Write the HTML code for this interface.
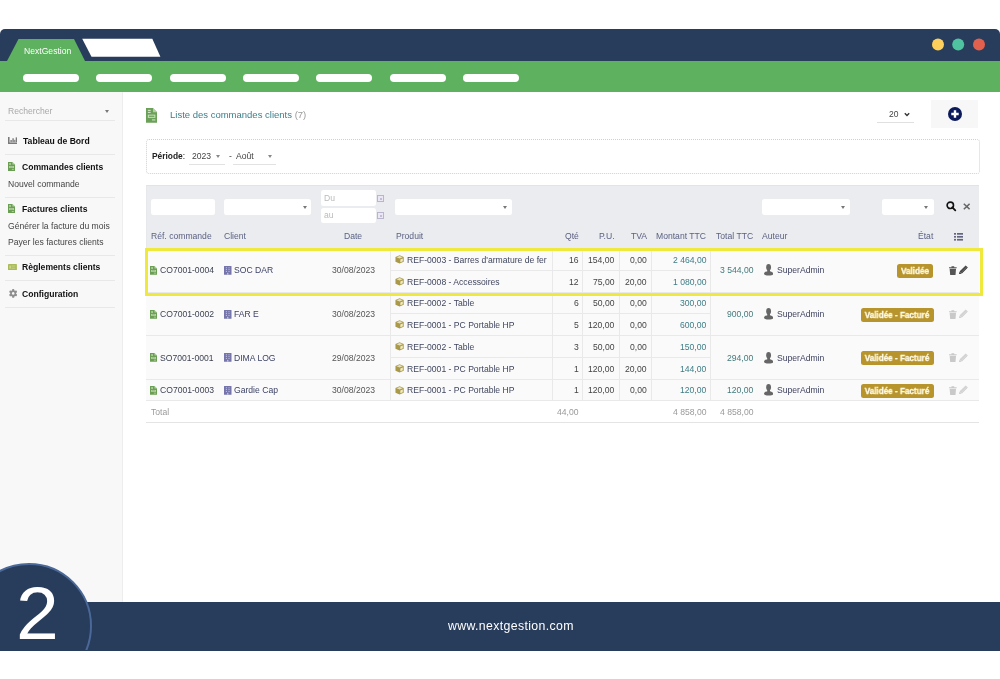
<!DOCTYPE html>
<html><head><meta charset="utf-8">
<style>
*{margin:0;padding:0;box-sizing:border-box}
html,body{width:1000px;height:679px;overflow:hidden;background:#fff;font-family:"Liberation Sans",sans-serif;position:relative}
.t{-webkit-font-smoothing:antialiased}
body>*{will-change:transform}
.a{position:absolute}
.t{position:absolute;white-space:nowrap;line-height:1}
</style></head>
<body>

<div class="a" style="left:0px;top:29px;width:1000.00px;height:32.00px;background:#283c5c;border-radius:5px 5px 0 0"></div>
<div class="a" style="left:0px;top:60.6px;width:1000.00px;height:31.40px;background:#5eb15f;"></div>
<svg class="a" style="left:0;top:0" width="1000" height="100">
  <polygon points="18.5,39 74,39 85,61 7,61" fill="#5eb15f"/>
  <polygon points="82.2,38.8 152.3,38.8 160.4,56.8 91.5,56.8" fill="#fff"/>
  <circle cx="938" cy="44.6" r="6" fill="#fdd05b"/>
  <circle cx="958.2" cy="44.6" r="6" fill="#4fc3a0"/>
  <circle cx="979" cy="44.6" r="6" fill="#e2604e"/>
</svg>
<div class="t" style="top:47.15px;font-size:8.6px;color:#fff;left:23.5px;">NextGestion</div>
<div class="a" style="left:23.0px;top:74px;width:56.00px;height:8.00px;background:#fff;border-radius:4px"></div>
<div class="a" style="left:96.3px;top:74px;width:56.00px;height:8.00px;background:#fff;border-radius:4px"></div>
<div class="a" style="left:169.6px;top:74px;width:56.00px;height:8.00px;background:#fff;border-radius:4px"></div>
<div class="a" style="left:242.9px;top:74px;width:56.00px;height:8.00px;background:#fff;border-radius:4px"></div>
<div class="a" style="left:316.2px;top:74px;width:56.00px;height:8.00px;background:#fff;border-radius:4px"></div>
<div class="a" style="left:389.5px;top:74px;width:56.00px;height:8.00px;background:#fff;border-radius:4px"></div>
<div class="a" style="left:462.8px;top:74px;width:56.00px;height:8.00px;background:#fff;border-radius:4px"></div>
<div class="a" style="left:0px;top:92px;width:122.50px;height:509.50px;background:#f8f8f8;border-right:1px solid #ededed"></div>
<div class="t" style="top:107.45px;font-size:8.6px;color:#a8a8a8;left:8.4px;">Rechercher</div>
<div class="a" style="left:105px;top:110px;width:0;height:0;border-left:2.5px solid transparent;border-right:2.5px solid transparent;border-top:3px solid #777"></div>
<div class="a" style="left:5px;top:119.5px;width:110.00px;height:1.00px;background:#e8e8e8;"></div>
<div class="a" style="left:5px;top:154.3px;width:110.00px;height:1.00px;background:#e8e8e8;"></div>
<div class="a" style="left:5px;top:196.6px;width:110.00px;height:1.00px;background:#e8e8e8;"></div>
<div class="a" style="left:5px;top:254.5px;width:110.00px;height:1.00px;background:#e8e8e8;"></div>
<div class="a" style="left:5px;top:280.3px;width:110.00px;height:1.00px;background:#e8e8e8;"></div>
<div class="a" style="left:5px;top:307.2px;width:110.00px;height:1.00px;background:#e8e8e8;"></div>
<svg class="a" style="left:8px;top:136.7px;" width="9.2" height="7.2" viewBox="0 0 13 10" preserveAspectRatio="none"><path d="M0,0 H2.2 V7.8 H13 V10 H0 Z" fill="#7a7a7a"/><rect x="3.4" y="4.2" width="2" height="3" fill="#7a7a7a"/><rect x="6.2" y="1.8" width="2" height="5.4" fill="#7a7a7a"/><rect x="8.8" y="4" width="1.6" height="3.2" fill="#7a7a7a"/><rect x="10.9" y="0.5" width="2" height="6.7" fill="#7a7a7a"/></svg>
<div class="t" style="top:136.65px;font-size:8.6px;color:#111;font-weight:bold;left:22.8px;">Tableau de Bord</div>
<svg class="a" style="left:8px;top:162px;" width="7" height="9" viewBox="0 0 12 16" preserveAspectRatio="none"><path d="M0,0 H7.5 L12,4.5 V16 H0 Z" fill="#6a9e52"/><path d="M7.5,0 V4.5 H12" fill="#cfe3c2" opacity="0.7"/><rect x="2" y="2" width="3" height="1.2" fill="#cfe3c2"/><rect x="2" y="4.2" width="3" height="1.2" fill="#cfe3c2"/><rect x="2" y="7.2" width="8" height="3.4" fill="#cfe3c2"/><rect x="3" y="8.2" width="6" height="1.4" fill="#6a9e52"/><rect x="6.5" y="12.3" width="3.5" height="1.2" fill="#cfe3c2"/></svg>
<svg class="a" style="left:8px;top:204px;" width="7" height="9.1" viewBox="0 0 12 16" preserveAspectRatio="none"><path d="M0,0 H7.5 L12,4.5 V16 H0 Z" fill="#6a9e52"/><path d="M7.5,0 V4.5 H12" fill="#cfe3c2" opacity="0.7"/><rect x="2" y="2" width="3" height="1.2" fill="#cfe3c2"/><rect x="2" y="4.2" width="3" height="1.2" fill="#cfe3c2"/><rect x="2" y="7.2" width="8" height="3.4" fill="#cfe3c2"/><rect x="3" y="8.2" width="6" height="1.4" fill="#6a9e52"/><rect x="6.5" y="12.3" width="3.5" height="1.2" fill="#cfe3c2"/></svg>
<svg class="a" style="left:8.1px;top:263.9px;" width="8.9" height="6.2" viewBox="0 0 14 10" preserveAspectRatio="none"><rect x="0" y="0" width="14" height="10" rx="1" fill="#a9bb58"/><rect x="2.5" y="2.5" width="1.6" height="5" fill="#dfe8b0"/><rect x="5.5" y="2.5" width="6" height="1.5" fill="#c9d68a"/><rect x="5.5" y="6" width="6" height="1.5" fill="#c9d68a"/></svg>
<svg class="a" style="left:8.5px;top:288.8px;" width="8.4" height="8.8" viewBox="0 0 16 16" preserveAspectRatio="none"><g fill="#8e8e8e"><circle cx="8" cy="8" r="5.6"/><rect x="6" y="0" width="4" height="16" rx="1.2" transform="rotate(0 8 8)"/><rect x="6" y="0" width="4" height="16" rx="1.2" transform="rotate(60 8 8)"/><rect x="6" y="0" width="4" height="16" rx="1.2" transform="rotate(120 8 8)"/></g><circle cx="8" cy="8" r="2.4" fill="#f8f8f8"/></svg>
<svg class="a" style="left:146.2px;top:107.7px;" width="11.2" height="14.8" viewBox="0 0 12 16" preserveAspectRatio="none"><path d="M0,0 H7.5 L12,4.5 V16 H0 Z" fill="#6ba058"/><path d="M7.5,0 V4.5 H12" fill="#cfe3c2" opacity="0.7"/><rect x="2" y="2" width="3" height="1.2" fill="#cfe3c2"/><rect x="2" y="4.2" width="3" height="1.2" fill="#cfe3c2"/><rect x="2" y="7.2" width="8" height="3.4" fill="#cfe3c2"/><rect x="3" y="8.2" width="6" height="1.4" fill="#6ba058"/><rect x="6.5" y="12.3" width="3.5" height="1.2" fill="#cfe3c2"/></svg>
<div class="t" style="top:163.35px;font-size:8.6px;color:#111;font-weight:bold;left:21.9px;">Commandes clients</div>
<div class="t" style="top:179.95px;font-size:8.6px;color:#444;left:7.9px;">Nouvel commande</div>
<div class="t" style="top:205.25px;font-size:8.6px;color:#111;font-weight:bold;left:21.8px;">Factures clients</div>
<div class="t" style="top:222.05px;font-size:8.6px;color:#444;left:7.8px;">Générer la facture du mois</div>
<div class="t" style="top:237.65px;font-size:8.6px;color:#444;left:7.8px;">Payer les factures clients</div>
<div class="t" style="top:263.15px;font-size:8.6px;color:#111;font-weight:bold;left:21.8px;">Règlements clients</div>
<div class="t" style="top:289.75px;font-size:8.6px;color:#111;font-weight:bold;left:21.8px;">Configuration</div>
<div class="t" style="top:110.33px;font-size:9.5px;color:#3b7f8c;left:170.4px;">Liste des commandes clients <span style="color:#999">(7)</span></div>
<div class="t" style="top:109.93px;font-size:8.5px;color:#444;left:888.5px;">20</div>
<svg class="a" style="left:903.5px;top:111.5px;" width="6" height="5" viewBox="0 0 6 5" preserveAspectRatio="none"><path d="M0.8,1.2 L3,3.4 L5.2,1.2" stroke="#333" stroke-width="1.4" fill="none"/></svg>
<div class="a" style="left:876.5px;top:122px;width:36.50px;height:1.00px;background:#e0e0e0;"></div>
<div class="a" style="left:930.7px;top:100px;width:46.90px;height:28.00px;background:#f7f7f8;"></div>
<svg class="a" style="left:947.5px;top:107.3px;" width="14" height="14" viewBox="0 0 14 14" preserveAspectRatio="none"><circle cx="7" cy="7" r="7" fill="#0d1a5a"/><path d="M7,3.3 V10.7 M3.3,7 H10.7" stroke="#fff" stroke-width="2.4"/></svg>
<div class="a" style="left:146px;top:139px;width:834px;height:35px;border:1px dotted #d0d0d0;border-radius:3px"></div>
<div class="t" style="top:152.31px;font-size:8.4px;color:#222;font-weight:bold;left:152.3px;">Période<span style="font-weight:normal">:</span></div>
<div class="t" style="top:152.15px;font-size:8.6px;color:#444;left:192px;">2023</div>
<div class="t" style="top:152.15px;font-size:8.6px;color:#444;left:229px;">-</div>
<div class="t" style="top:152.15px;font-size:8.6px;color:#444;left:236px;">Août</div>
<div class="a" style="left:215.5px;top:155px;width:0;height:0;border-left:2.5px solid transparent;border-right:2.5px solid transparent;border-top:3px solid #888"></div>
<div class="a" style="left:267.5px;top:155px;width:0;height:0;border-left:2.5px solid transparent;border-right:2.5px solid transparent;border-top:3px solid #888"></div>
<div class="a" style="left:189px;top:164px;width:35.60px;height:1.00px;background:#e2e2e2;"></div>
<div class="a" style="left:233px;top:164px;width:43.00px;height:1.00px;background:#e2e2e2;"></div>
<div class="a" style="left:146px;top:185.2px;width:832.80px;height:62.80px;background:#ebecef;border-top:1.6px solid #e2e3e6;border-left:1px solid #e7e8eb"></div>
<div class="a" style="left:150.6px;top:198.6px;width:64.10px;height:16.20px;background:#fff;border-radius:2.5px"></div>
<div class="a" style="left:224px;top:198.6px;width:87.40px;height:16.20px;background:#fff;border-radius:2.5px"></div>
<div class="a" style="left:302.5px;top:205.5px;width:0;height:0;border-left:2.5px solid transparent;border-right:2.5px solid transparent;border-top:3px solid #777"></div>
<div class="a" style="left:321.4px;top:190.2px;width:54.50px;height:15.60px;background:#fff;border-radius:2.5px"></div>
<div class="a" style="left:321.4px;top:207.6px;width:54.50px;height:15.30px;background:#fff;border-radius:2.5px"></div>
<div class="a" style="left:395.4px;top:198.6px;width:117.40px;height:16.20px;background:#fff;border-radius:2.5px"></div>
<div class="a" style="left:503.0px;top:205.5px;width:0;height:0;border-left:2.5px solid transparent;border-right:2.5px solid transparent;border-top:3px solid #777"></div>
<div class="a" style="left:762.3px;top:198.6px;width:87.80px;height:16.20px;background:#fff;border-radius:2.5px"></div>
<div class="a" style="left:840.5px;top:205.5px;width:0;height:0;border-left:2.5px solid transparent;border-right:2.5px solid transparent;border-top:3px solid #777"></div>
<div class="a" style="left:881.7px;top:198.6px;width:51.60px;height:16.20px;background:#fff;border-radius:2.5px"></div>
<div class="a" style="left:923.5px;top:205.5px;width:0;height:0;border-left:2.5px solid transparent;border-right:2.5px solid transparent;border-top:3px solid #777"></div>
<div class="t" style="top:193.75px;font-size:8.6px;color:#bbb;left:324px;">Du</div>
<div class="t" style="top:211.15px;font-size:8.6px;color:#bbb;left:324px;">au</div>
<div class="a" style="left:377.3px;top:195px;width:7.2px;height:6.6px;border:1px solid #b9b5cc;border-top-width:1.6px;background:#eae8f2"></div>
<div class="a" style="left:379.8px;top:197.6px;width:2.00px;height:2.00px;background:#c9b8d8;"></div>
<div class="a" style="left:377.3px;top:212.2px;width:7.2px;height:6.6px;border:1px solid #b9b5cc;border-top-width:1.6px;background:#eae8f2"></div>
<div class="a" style="left:379.8px;top:214.79999999999998px;width:2.00px;height:2.00px;background:#c9b8d8;"></div>
<svg class="a" style="left:945.5px;top:201px;" width="11" height="10.5" viewBox="0 0 11 10.5" preserveAspectRatio="none"><circle cx="4.3" cy="4.3" r="3.2" stroke="#111" stroke-width="1.6" fill="none"/><path d="M6.3,6.3 L9.3,9.3" stroke="#111" stroke-width="1.8" stroke-linecap="round"/></svg>
<svg class="a" style="left:963px;top:203px;" width="7.4" height="7" viewBox="0 0 7.4 7" preserveAspectRatio="none"><path d="M0.8,0.8 L6.6,6.2 M6.6,0.8 L0.8,6.2" stroke="#666" stroke-width="1.5"/></svg>
<div class="t" style="top:232.15px;font-size:8.6px;color:#5b6183;left:150.6px;">Réf. commande</div>
<div class="t" style="top:232.15px;font-size:8.6px;color:#5b6183;left:224px;">Client</div>
<div class="t" style="top:232.15px;font-size:8.6px;color:#5b6183;right:637.50px;">Date</div>
<div class="t" style="top:232.15px;font-size:8.6px;color:#5b6183;left:395.5px;">Produit</div>
<div class="t" style="top:232.15px;font-size:8.6px;color:#5b6183;right:421.00px;">Qté</div>
<div class="t" style="top:232.15px;font-size:8.6px;color:#5b6183;right:385.50px;">P.U.</div>
<div class="t" style="top:232.15px;font-size:8.6px;color:#5b6183;right:352.70px;">TVA</div>
<div class="t" style="top:232.15px;font-size:8.6px;color:#5b6183;right:293.80px;">Montant TTC</div>
<div class="t" style="top:232.15px;font-size:8.6px;color:#5b6183;right:246.50px;">Total TTC</div>
<div class="t" style="top:232.15px;font-size:8.6px;color:#5b6183;left:762.3px;">Auteur</div>
<div class="t" style="top:232.15px;font-size:8.6px;color:#5b6183;right:66.50px;">État</div>
<svg class="a" style="left:953.8px;top:233px;" width="9.4" height="7.8" viewBox="0 0 9.4 7.8" preserveAspectRatio="none"><g fill="#62657f"><rect x="0" y="0" width="2" height="1.7"/><rect x="0" y="2.95" width="2" height="1.7"/><rect x="0" y="5.9" width="2" height="1.7"/><rect x="3" y="0" width="6.4" height="1.7"/><rect x="3" y="2.95" width="6.4" height="1.7"/><rect x="3" y="5.9" width="6.4" height="1.7"/></g></svg>
<div class="a" style="left:146px;top:248px;width:833.00px;height:152.80px;background:#fafafa;"></div>
<div class="a" style="left:389.5px;top:248px;width:1.00px;height:152.80px;background:#e9e9e9;"></div>
<div class="a" style="left:552.1px;top:248px;width:1.00px;height:152.80px;background:#e9e9e9;"></div>
<div class="a" style="left:582.3px;top:248px;width:1.00px;height:152.80px;background:#e9e9e9;"></div>
<div class="a" style="left:618.6px;top:248px;width:1.00px;height:152.80px;background:#e9e9e9;"></div>
<div class="a" style="left:650.7px;top:248px;width:1.00px;height:152.80px;background:#e9e9e9;"></div>
<div class="a" style="left:709.8px;top:248px;width:1.00px;height:152.80px;background:#e9e9e9;"></div>
<div class="a" style="left:146px;top:291.5px;width:833.00px;height:1.00px;background:#e9e9e9;"></div>
<div class="a" style="left:390px;top:269.7px;width:320.30px;height:1.00px;background:#e9e9e9;"></div>
<svg class="a" style="left:150.2px;top:265.8px;" width="7.1" height="8.8" viewBox="0 0 12 16" preserveAspectRatio="none"><path d="M0,0 H7.5 L12,4.5 V16 H0 Z" fill="#6a9e52"/><path d="M7.5,0 V4.5 H12" fill="#cfe3c2" opacity="0.7"/><rect x="2" y="2" width="3" height="1.2" fill="#cfe3c2"/><rect x="2" y="4.2" width="3" height="1.2" fill="#cfe3c2"/><rect x="2" y="7.2" width="8" height="3.4" fill="#cfe3c2"/><rect x="3" y="8.2" width="6" height="1.4" fill="#6a9e52"/><rect x="6.5" y="12.3" width="3.5" height="1.2" fill="#cfe3c2"/></svg>
<div class="t" style="top:266.45px;font-size:8.6px;color:#3d4352;left:159.5px;">CO7001-0004</div>
<svg class="a" style="left:224px;top:265.8px;" width="7.5" height="8.7" viewBox="0 0 12 14" preserveAspectRatio="none"><rect x="0" y="0" width="12" height="14" rx="0.5" fill="#7574ab"/><g fill="#c9c8e6"><rect x="3" y="2" width="1.6" height="1.6"/><rect x="7.2" y="2" width="1.6" height="1.6"/><rect x="3" y="5" width="1.6" height="1.6"/><rect x="7.2" y="5" width="1.6" height="1.6"/><rect x="3" y="8" width="1.6" height="1.6"/><rect x="7.2" y="8" width="1.6" height="1.6"/><rect x="5" y="11" width="2" height="3"/></g></svg>
<div class="t" style="top:266.45px;font-size:8.6px;color:#3d4366;left:233.5px;">SOC DAR</div>
<div class="t" style="top:266.45px;font-size:8.6px;color:#555;right:625.00px;">30/08/2023</div>
<svg class="a" style="left:395.3px;top:254.70000000000002px;" width="9.2" height="8.8" viewBox="0 0 16 16" preserveAspectRatio="none"><path d="M8,0.5 L15.2,3.6 V12.2 L8,15.5 L0.8,12.2 V3.6 Z" fill="#a9994a"/><path d="M2.6,4 L8,1.8 L13.4,4 L8,6.3 Z" fill="#e9e2b8"/><path d="M9.3,8.2 L13.6,6.3 V11.2 L9.3,13.2 Z" fill="#f1ecc6"/></svg>
<div class="t" style="top:255.55px;font-size:8.6px;color:#40465f;left:406.5px;">REF-0003 - Barres d'armature de fer</div>
<div class="t" style="top:255.55px;font-size:8.6px;color:#444;right:421.50px;">16</div>
<div class="t" style="top:255.55px;font-size:8.6px;color:#444;right:385.50px;">154,00</div>
<div class="t" style="top:255.55px;font-size:8.6px;color:#444;right:353.50px;">0,00</div>
<div class="t" style="top:255.55px;font-size:8.6px;color:#3e7c86;right:294.00px;">2 464,00</div>
<svg class="a" style="left:395.3px;top:276.70000000000005px;" width="9.2" height="8.8" viewBox="0 0 16 16" preserveAspectRatio="none"><path d="M8,0.5 L15.2,3.6 V12.2 L8,15.5 L0.8,12.2 V3.6 Z" fill="#a9994a"/><path d="M2.6,4 L8,1.8 L13.4,4 L8,6.3 Z" fill="#e9e2b8"/><path d="M9.3,8.2 L13.6,6.3 V11.2 L9.3,13.2 Z" fill="#f1ecc6"/></svg>
<div class="t" style="top:277.55px;font-size:8.6px;color:#40465f;left:406.5px;">REF-0008 - Accessoires</div>
<div class="t" style="top:277.55px;font-size:8.6px;color:#444;right:421.50px;">12</div>
<div class="t" style="top:277.55px;font-size:8.6px;color:#444;right:385.50px;">75,00</div>
<div class="t" style="top:277.55px;font-size:8.6px;color:#444;right:353.50px;">20,00</div>
<div class="t" style="top:277.55px;font-size:8.6px;color:#3e7c86;right:294.00px;">1 080,00</div>
<div class="t" style="top:266.45px;font-size:8.6px;color:#447a7c;right:246.50px;">3 544,00</div>
<svg class="a" style="left:763.6px;top:264.4px;" width="9.2" height="11.5" viewBox="0 0 16 20" preserveAspectRatio="none"><ellipse cx="8" cy="5.8" rx="4.2" ry="5.6" fill="#666"/><rect x="5.6" y="9" width="4.8" height="5" fill="#666"/><path d="M0,17 C0,14 3.5,12.6 8,12.6 C12.5,12.6 16,14 16,17 C16,19.2 13,20 8,20 C3,20 0,19.2 0,17 Z" fill="#666"/></svg>
<div class="t" style="top:266.45px;font-size:8.6px;color:#3f4360;left:776.5px;">SuperAdmin</div>
<div class="a" style="left:897.3px;top:263.8px;width:36.00px;height:13.80px;background:#b8942c;border-radius:2.5px"></div>
<div class="t" style="top:266.87px;font-size:8.7px;color:#fffbe6;font-weight:bold;left:715.3px;width:400px;text-align:center;transform:scaleX(0.935);transform-origin:50% 50%;-webkit-text-stroke:0.3px #fffbe6;">Validée</div>
<svg class="a" style="left:949.2px;top:265.8px;" width="7.7" height="9.3" viewBox="0 0 14 17" preserveAspectRatio="none"><path d="M0,2.5 H14 V4.3 H0 Z M4.5,0.5 H9.5 V2.5 H4.5 Z" fill="#555"/><path d="M1.2,5 H12.8 L11.8,17 H2.2 Z" fill="#555"/></svg>
<svg class="a" style="left:958.8px;top:265.4px;" width="9.3" height="9.2" viewBox="0 0 16 16" preserveAspectRatio="none"><path d="M11.5,0.8 L15.2,4.5 L5,14.7 L1.3,11 Z" fill="#333"/><path d="M1,11.4 L4.6,15 L0,16 Z" fill="#333"/><path d="M3.2,11.6 L12.4,2.4 M4.4,12.8 L13.6,3.6" stroke="#fff" stroke-width="0.7" opacity="0.6"/></svg>
<div class="a" style="left:146px;top:334.9px;width:833.00px;height:1.00px;background:#e9e9e9;"></div>
<div class="a" style="left:390px;top:313.2px;width:320.30px;height:1.00px;background:#e9e9e9;"></div>
<svg class="a" style="left:150.2px;top:309.5px;" width="7.1" height="8.8" viewBox="0 0 12 16" preserveAspectRatio="none"><path d="M0,0 H7.5 L12,4.5 V16 H0 Z" fill="#6a9e52"/><path d="M7.5,0 V4.5 H12" fill="#cfe3c2" opacity="0.7"/><rect x="2" y="2" width="3" height="1.2" fill="#cfe3c2"/><rect x="2" y="4.2" width="3" height="1.2" fill="#cfe3c2"/><rect x="2" y="7.2" width="8" height="3.4" fill="#cfe3c2"/><rect x="3" y="8.2" width="6" height="1.4" fill="#6a9e52"/><rect x="6.5" y="12.3" width="3.5" height="1.2" fill="#cfe3c2"/></svg>
<div class="t" style="top:310.15px;font-size:8.6px;color:#3d4352;left:159.5px;">CO7001-0002</div>
<svg class="a" style="left:224px;top:309.5px;" width="7.5" height="8.7" viewBox="0 0 12 14" preserveAspectRatio="none"><rect x="0" y="0" width="12" height="14" rx="0.5" fill="#7574ab"/><g fill="#c9c8e6"><rect x="3" y="2" width="1.6" height="1.6"/><rect x="7.2" y="2" width="1.6" height="1.6"/><rect x="3" y="5" width="1.6" height="1.6"/><rect x="7.2" y="5" width="1.6" height="1.6"/><rect x="3" y="8" width="1.6" height="1.6"/><rect x="7.2" y="8" width="1.6" height="1.6"/><rect x="5" y="11" width="2" height="3"/></g></svg>
<div class="t" style="top:310.15px;font-size:8.6px;color:#3d4366;left:233.5px;">FAR E</div>
<div class="t" style="top:310.15px;font-size:8.6px;color:#555;right:625.00px;">30/08/2023</div>
<svg class="a" style="left:395.3px;top:298.45000000000005px;" width="9.2" height="8.8" viewBox="0 0 16 16" preserveAspectRatio="none"><path d="M8,0.5 L15.2,3.6 V12.2 L8,15.5 L0.8,12.2 V3.6 Z" fill="#a9994a"/><path d="M2.6,4 L8,1.8 L13.4,4 L8,6.3 Z" fill="#e9e2b8"/><path d="M9.3,8.2 L13.6,6.3 V11.2 L9.3,13.2 Z" fill="#f1ecc6"/></svg>
<div class="t" style="top:299.30px;font-size:8.6px;color:#40465f;left:406.5px;">REF-0002 - Table</div>
<div class="t" style="top:299.30px;font-size:8.6px;color:#444;right:421.50px;">6</div>
<div class="t" style="top:299.30px;font-size:8.6px;color:#444;right:385.50px;">50,00</div>
<div class="t" style="top:299.30px;font-size:8.6px;color:#444;right:353.50px;">0,00</div>
<div class="t" style="top:299.30px;font-size:8.6px;color:#3e7c86;right:294.00px;">300,00</div>
<svg class="a" style="left:395.3px;top:320.15px;" width="9.2" height="8.8" viewBox="0 0 16 16" preserveAspectRatio="none"><path d="M8,0.5 L15.2,3.6 V12.2 L8,15.5 L0.8,12.2 V3.6 Z" fill="#a9994a"/><path d="M2.6,4 L8,1.8 L13.4,4 L8,6.3 Z" fill="#e9e2b8"/><path d="M9.3,8.2 L13.6,6.3 V11.2 L9.3,13.2 Z" fill="#f1ecc6"/></svg>
<div class="t" style="top:321.00px;font-size:8.6px;color:#40465f;left:406.5px;">REF-0001 - PC Portable HP</div>
<div class="t" style="top:321.00px;font-size:8.6px;color:#444;right:421.50px;">5</div>
<div class="t" style="top:321.00px;font-size:8.6px;color:#444;right:385.50px;">120,00</div>
<div class="t" style="top:321.00px;font-size:8.6px;color:#444;right:353.50px;">0,00</div>
<div class="t" style="top:321.00px;font-size:8.6px;color:#3e7c86;right:294.00px;">600,00</div>
<div class="t" style="top:310.15px;font-size:8.6px;color:#447a7c;right:246.50px;">900,00</div>
<svg class="a" style="left:763.6px;top:308.09999999999997px;" width="9.2" height="11.5" viewBox="0 0 16 20" preserveAspectRatio="none"><ellipse cx="8" cy="5.8" rx="4.2" ry="5.6" fill="#666"/><rect x="5.6" y="9" width="4.8" height="5" fill="#666"/><path d="M0,17 C0,14 3.5,12.6 8,12.6 C12.5,12.6 16,14 16,17 C16,19.2 13,20 8,20 C3,20 0,19.2 0,17 Z" fill="#666"/></svg>
<div class="t" style="top:310.15px;font-size:8.6px;color:#3f4360;left:776.5px;">SuperAdmin</div>
<div class="a" style="left:860.8px;top:307.5px;width:72.50px;height:13.80px;background:#b8942c;border-radius:2.5px"></div>
<div class="t" style="top:310.57px;font-size:8.7px;color:#fffbe6;font-weight:bold;left:697.05px;width:400px;text-align:center;transform:scaleX(0.935);transform-origin:50% 50%;-webkit-text-stroke:0.3px #fffbe6;">Validée - Facturé</div>
<svg class="a" style="left:949.2px;top:309.5px;" width="7.7" height="9.3" viewBox="0 0 14 17" preserveAspectRatio="none"><path d="M0,2.5 H14 V4.3 H0 Z M4.5,0.5 H9.5 V2.5 H4.5 Z" fill="#c9c9c9"/><path d="M1.2,5 H12.8 L11.8,17 H2.2 Z" fill="#c9c9c9"/></svg>
<svg class="a" style="left:958.8px;top:309.09999999999997px;" width="9.3" height="9.2" viewBox="0 0 16 16" preserveAspectRatio="none"><path d="M11.5,0.8 L15.2,4.5 L5,14.7 L1.3,11 Z" fill="#cdcdcd"/><path d="M1,11.4 L4.6,15 L0,16 Z" fill="#cdcdcd"/><path d="M3.2,11.6 L12.4,2.4 M4.4,12.8 L13.6,3.6" stroke="#fff" stroke-width="0.7" opacity="0.6"/></svg>
<div class="a" style="left:146px;top:378.7px;width:833.00px;height:1.00px;background:#e9e9e9;"></div>
<div class="a" style="left:390px;top:356.8px;width:320.30px;height:1.00px;background:#e9e9e9;"></div>
<svg class="a" style="left:150.2px;top:353.09999999999997px;" width="7.1" height="8.8" viewBox="0 0 12 16" preserveAspectRatio="none"><path d="M0,0 H7.5 L12,4.5 V16 H0 Z" fill="#6a9e52"/><path d="M7.5,0 V4.5 H12" fill="#cfe3c2" opacity="0.7"/><rect x="2" y="2" width="3" height="1.2" fill="#cfe3c2"/><rect x="2" y="4.2" width="3" height="1.2" fill="#cfe3c2"/><rect x="2" y="7.2" width="8" height="3.4" fill="#cfe3c2"/><rect x="3" y="8.2" width="6" height="1.4" fill="#6a9e52"/><rect x="6.5" y="12.3" width="3.5" height="1.2" fill="#cfe3c2"/></svg>
<div class="t" style="top:353.75px;font-size:8.6px;color:#3d4352;left:159.5px;">SO7001-0001</div>
<svg class="a" style="left:224px;top:353.09999999999997px;" width="7.5" height="8.7" viewBox="0 0 12 14" preserveAspectRatio="none"><rect x="0" y="0" width="12" height="14" rx="0.5" fill="#7574ab"/><g fill="#c9c8e6"><rect x="3" y="2" width="1.6" height="1.6"/><rect x="7.2" y="2" width="1.6" height="1.6"/><rect x="3" y="5" width="1.6" height="1.6"/><rect x="7.2" y="5" width="1.6" height="1.6"/><rect x="3" y="8" width="1.6" height="1.6"/><rect x="7.2" y="8" width="1.6" height="1.6"/><rect x="5" y="11" width="2" height="3"/></g></svg>
<div class="t" style="top:353.75px;font-size:8.6px;color:#3d4366;left:233.5px;">DIMA LOG</div>
<div class="t" style="top:353.75px;font-size:8.6px;color:#555;right:625.00px;">29/08/2023</div>
<svg class="a" style="left:395.3px;top:341.95000000000005px;" width="9.2" height="8.8" viewBox="0 0 16 16" preserveAspectRatio="none"><path d="M8,0.5 L15.2,3.6 V12.2 L8,15.5 L0.8,12.2 V3.6 Z" fill="#a9994a"/><path d="M2.6,4 L8,1.8 L13.4,4 L8,6.3 Z" fill="#e9e2b8"/><path d="M9.3,8.2 L13.6,6.3 V11.2 L9.3,13.2 Z" fill="#f1ecc6"/></svg>
<div class="t" style="top:342.80px;font-size:8.6px;color:#40465f;left:406.5px;">REF-0002 - Table</div>
<div class="t" style="top:342.80px;font-size:8.6px;color:#444;right:421.50px;">3</div>
<div class="t" style="top:342.80px;font-size:8.6px;color:#444;right:385.50px;">50,00</div>
<div class="t" style="top:342.80px;font-size:8.6px;color:#444;right:353.50px;">0,00</div>
<div class="t" style="top:342.80px;font-size:8.6px;color:#3e7c86;right:294.00px;">150,00</div>
<svg class="a" style="left:395.3px;top:363.85px;" width="9.2" height="8.8" viewBox="0 0 16 16" preserveAspectRatio="none"><path d="M8,0.5 L15.2,3.6 V12.2 L8,15.5 L0.8,12.2 V3.6 Z" fill="#a9994a"/><path d="M2.6,4 L8,1.8 L13.4,4 L8,6.3 Z" fill="#e9e2b8"/><path d="M9.3,8.2 L13.6,6.3 V11.2 L9.3,13.2 Z" fill="#f1ecc6"/></svg>
<div class="t" style="top:364.70px;font-size:8.6px;color:#40465f;left:406.5px;">REF-0001 - PC Portable HP</div>
<div class="t" style="top:364.70px;font-size:8.6px;color:#444;right:421.50px;">1</div>
<div class="t" style="top:364.70px;font-size:8.6px;color:#444;right:385.50px;">120,00</div>
<div class="t" style="top:364.70px;font-size:8.6px;color:#444;right:353.50px;">20,00</div>
<div class="t" style="top:364.70px;font-size:8.6px;color:#3e7c86;right:294.00px;">144,00</div>
<div class="t" style="top:353.75px;font-size:8.6px;color:#447a7c;right:246.50px;">294,00</div>
<svg class="a" style="left:763.6px;top:351.69999999999993px;" width="9.2" height="11.5" viewBox="0 0 16 20" preserveAspectRatio="none"><ellipse cx="8" cy="5.8" rx="4.2" ry="5.6" fill="#666"/><rect x="5.6" y="9" width="4.8" height="5" fill="#666"/><path d="M0,17 C0,14 3.5,12.6 8,12.6 C12.5,12.6 16,14 16,17 C16,19.2 13,20 8,20 C3,20 0,19.2 0,17 Z" fill="#666"/></svg>
<div class="t" style="top:353.75px;font-size:8.6px;color:#3f4360;left:776.5px;">SuperAdmin</div>
<div class="a" style="left:860.8px;top:351.09999999999997px;width:72.50px;height:13.80px;background:#b8942c;border-radius:2.5px"></div>
<div class="t" style="top:354.17px;font-size:8.7px;color:#fffbe6;font-weight:bold;left:697.05px;width:400px;text-align:center;transform:scaleX(0.935);transform-origin:50% 50%;-webkit-text-stroke:0.3px #fffbe6;">Validée - Facturé</div>
<svg class="a" style="left:949.2px;top:353.09999999999997px;" width="7.7" height="9.3" viewBox="0 0 14 17" preserveAspectRatio="none"><path d="M0,2.5 H14 V4.3 H0 Z M4.5,0.5 H9.5 V2.5 H4.5 Z" fill="#c9c9c9"/><path d="M1.2,5 H12.8 L11.8,17 H2.2 Z" fill="#c9c9c9"/></svg>
<svg class="a" style="left:958.8px;top:352.69999999999993px;" width="9.3" height="9.2" viewBox="0 0 16 16" preserveAspectRatio="none"><path d="M11.5,0.8 L15.2,4.5 L5,14.7 L1.3,11 Z" fill="#cdcdcd"/><path d="M1,11.4 L4.6,15 L0,16 Z" fill="#cdcdcd"/><path d="M3.2,11.6 L12.4,2.4 M4.4,12.8 L13.6,3.6" stroke="#fff" stroke-width="0.7" opacity="0.6"/></svg>
<div class="a" style="left:146px;top:400.3px;width:833.00px;height:1.00px;background:#e9e9e9;"></div>
<svg class="a" style="left:150.2px;top:385.8px;" width="7.1" height="8.8" viewBox="0 0 12 16" preserveAspectRatio="none"><path d="M0,0 H7.5 L12,4.5 V16 H0 Z" fill="#6a9e52"/><path d="M7.5,0 V4.5 H12" fill="#cfe3c2" opacity="0.7"/><rect x="2" y="2" width="3" height="1.2" fill="#cfe3c2"/><rect x="2" y="4.2" width="3" height="1.2" fill="#cfe3c2"/><rect x="2" y="7.2" width="8" height="3.4" fill="#cfe3c2"/><rect x="3" y="8.2" width="6" height="1.4" fill="#6a9e52"/><rect x="6.5" y="12.3" width="3.5" height="1.2" fill="#cfe3c2"/></svg>
<div class="t" style="top:386.45px;font-size:8.6px;color:#3d4352;left:159.5px;">CO7001-0003</div>
<svg class="a" style="left:224px;top:385.8px;" width="7.5" height="8.7" viewBox="0 0 12 14" preserveAspectRatio="none"><rect x="0" y="0" width="12" height="14" rx="0.5" fill="#7574ab"/><g fill="#c9c8e6"><rect x="3" y="2" width="1.6" height="1.6"/><rect x="7.2" y="2" width="1.6" height="1.6"/><rect x="3" y="5" width="1.6" height="1.6"/><rect x="7.2" y="5" width="1.6" height="1.6"/><rect x="3" y="8" width="1.6" height="1.6"/><rect x="7.2" y="8" width="1.6" height="1.6"/><rect x="5" y="11" width="2" height="3"/></g></svg>
<div class="t" style="top:386.45px;font-size:8.6px;color:#3d4366;left:233.5px;">Gardie Cap</div>
<div class="t" style="top:386.45px;font-size:8.6px;color:#555;right:625.00px;">30/08/2023</div>
<svg class="a" style="left:395.3px;top:385.6px;" width="9.2" height="8.8" viewBox="0 0 16 16" preserveAspectRatio="none"><path d="M8,0.5 L15.2,3.6 V12.2 L8,15.5 L0.8,12.2 V3.6 Z" fill="#a9994a"/><path d="M2.6,4 L8,1.8 L13.4,4 L8,6.3 Z" fill="#e9e2b8"/><path d="M9.3,8.2 L13.6,6.3 V11.2 L9.3,13.2 Z" fill="#f1ecc6"/></svg>
<div class="t" style="top:386.45px;font-size:8.6px;color:#40465f;left:406.5px;">REF-0001 - PC Portable HP</div>
<div class="t" style="top:386.45px;font-size:8.6px;color:#444;right:421.50px;">1</div>
<div class="t" style="top:386.45px;font-size:8.6px;color:#444;right:385.50px;">120,00</div>
<div class="t" style="top:386.45px;font-size:8.6px;color:#444;right:353.50px;">0,00</div>
<div class="t" style="top:386.45px;font-size:8.6px;color:#3e7c86;right:294.00px;">120,00</div>
<div class="t" style="top:386.45px;font-size:8.6px;color:#447a7c;right:246.50px;">120,00</div>
<svg class="a" style="left:763.6px;top:384.4px;" width="9.2" height="11.5" viewBox="0 0 16 20" preserveAspectRatio="none"><ellipse cx="8" cy="5.8" rx="4.2" ry="5.6" fill="#666"/><rect x="5.6" y="9" width="4.8" height="5" fill="#666"/><path d="M0,17 C0,14 3.5,12.6 8,12.6 C12.5,12.6 16,14 16,17 C16,19.2 13,20 8,20 C3,20 0,19.2 0,17 Z" fill="#666"/></svg>
<div class="t" style="top:386.45px;font-size:8.6px;color:#3f4360;left:776.5px;">SuperAdmin</div>
<div class="a" style="left:860.8px;top:383.8px;width:72.50px;height:13.80px;background:#b8942c;border-radius:2.5px"></div>
<div class="t" style="top:386.87px;font-size:8.7px;color:#fffbe6;font-weight:bold;left:697.05px;width:400px;text-align:center;transform:scaleX(0.935);transform-origin:50% 50%;-webkit-text-stroke:0.3px #fffbe6;">Validée - Facturé</div>
<svg class="a" style="left:949.2px;top:385.8px;" width="7.7" height="9.3" viewBox="0 0 14 17" preserveAspectRatio="none"><path d="M0,2.5 H14 V4.3 H0 Z M4.5,0.5 H9.5 V2.5 H4.5 Z" fill="#c9c9c9"/><path d="M1.2,5 H12.8 L11.8,17 H2.2 Z" fill="#c9c9c9"/></svg>
<svg class="a" style="left:958.8px;top:385.4px;" width="9.3" height="9.2" viewBox="0 0 16 16" preserveAspectRatio="none"><path d="M11.5,0.8 L15.2,4.5 L5,14.7 L1.3,11 Z" fill="#cdcdcd"/><path d="M1,11.4 L4.6,15 L0,16 Z" fill="#cdcdcd"/><path d="M3.2,11.6 L12.4,2.4 M4.4,12.8 L13.6,3.6" stroke="#fff" stroke-width="0.7" opacity="0.6"/></svg>
<div class="a" style="left:146px;top:421.7px;width:833.00px;height:1.00px;background:#e4e4e4;"></div>
<div class="t" style="top:407.55px;font-size:8.6px;color:#9a9a9a;left:150.6px;">Total</div>
<div class="t" style="top:407.55px;font-size:8.6px;color:#9a9a9a;right:421.50px;">44,00</div>
<div class="t" style="top:407.55px;font-size:8.6px;color:#9a9a9a;right:294.00px;">4 858,00</div>
<div class="t" style="top:407.55px;font-size:8.6px;color:#9a9a9a;right:246.50px;">4 858,00</div>
<div class="a" style="left:144.8px;top:248px;width:837.5px;height:47.7px;border:3.7px solid #eee93c"></div>
<div class="a" style="left:0px;top:601.5px;width:1000.00px;height:48.50px;background:#283c5c;"></div>
<div class="t" style="top:620.40px;font-size:12.3px;color:#fff;left:447.8px;letter-spacing:0.36px;">www.nextgestion.com</div>
<div class="a" style="left:0;top:540px;width:100px;height:110px;overflow:hidden"><div class="a" style="left:-34px;top:23px;width:126px;height:126px;border-radius:50%;background:#283c5c;border:2px solid #4a6898"></div></div>
<div class="t" style="top:577.06px;font-size:74px;color:#fff;left:16.4px;transform:scaleX(1.04);transform-origin:0 0;">2</div>
</body></html>
